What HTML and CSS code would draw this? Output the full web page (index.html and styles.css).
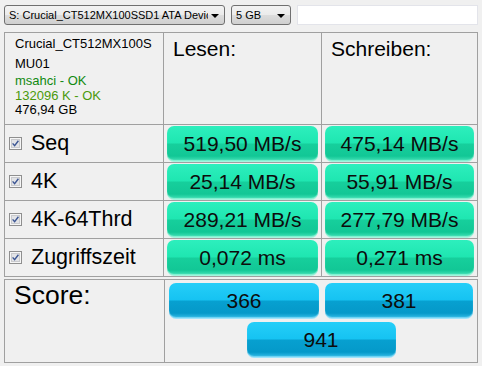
FILE: index.html
```html
<!DOCTYPE html>
<html lang="de">
<head>
  <meta charset="UTF-8" />
  <title>AS SSD Benchmark</title>
  <link rel="stylesheet" href="styles.css">
</head>
<body>

  <div class="toolbar">
    <div class="combo drive"><span>S: Crucial_CT512MX100SSD1 ATA Device</span><i class="arrow"></i></div>
    <div class="combo size"><span>5 GB</span><i class="arrow"></i></div>
    <div class="field"></div>
  </div>

  <div class="results">
    <div class="cell info">
      <div class="name">Crucial_CT512MX100S<br>MU01</div>
      <div class="driver">msahci - OK</div>
      <div class="cache">132096 K - OK</div>
      <div class="capacity">476,94 GB</div>
    </div>
    <div class="cell head">Lesen:</div>
    <div class="cell head">Schreiben:</div>

    <div class="cell label">
      <svg class="check" width="13" height="13" viewBox="0 0 13 13"><rect x="0.5" y="0.5" width="12" height="12" fill="#f6f6f6" stroke="#8f8f8f"/><rect x="2.5" y="2.5" width="8" height="8" fill="#e2e3e6" stroke="#c9cacd"/><path d="M3.6 6.4 L5.6 8.6 L9.4 3.8" fill="none" stroke="#3b5593" stroke-width="1.4"/></svg>
      Seq
    </div>
    <div class="cell slot"><div class="value">519,50 MB/s</div></div>
    <div class="cell slot"><div class="value">475,14 MB/s</div></div>

    <div class="cell label">
      <svg class="check" width="13" height="13" viewBox="0 0 13 13"><rect x="0.5" y="0.5" width="12" height="12" fill="#f6f6f6" stroke="#8f8f8f"/><rect x="2.5" y="2.5" width="8" height="8" fill="#e2e3e6" stroke="#c9cacd"/><path d="M3.6 6.4 L5.6 8.6 L9.4 3.8" fill="none" stroke="#3b5593" stroke-width="1.4"/></svg>
      4K
    </div>
    <div class="cell slot"><div class="value">25,14 MB/s</div></div>
    <div class="cell slot"><div class="value">55,91 MB/s</div></div>

    <div class="cell label">
      <svg class="check" width="13" height="13" viewBox="0 0 13 13"><rect x="0.5" y="0.5" width="12" height="12" fill="#f6f6f6" stroke="#8f8f8f"/><rect x="2.5" y="2.5" width="8" height="8" fill="#e2e3e6" stroke="#c9cacd"/><path d="M3.6 6.4 L5.6 8.6 L9.4 3.8" fill="none" stroke="#3b5593" stroke-width="1.4"/></svg>
      4K-64Thrd
    </div>
    <div class="cell slot"><div class="value">289,21 MB/s</div></div>
    <div class="cell slot"><div class="value">277,79 MB/s</div></div>

    <div class="cell label">
      <svg class="check" width="13" height="13" viewBox="0 0 13 13"><rect x="0.5" y="0.5" width="12" height="12" fill="#f6f6f6" stroke="#8f8f8f"/><rect x="2.5" y="2.5" width="8" height="8" fill="#e2e3e6" stroke="#c9cacd"/><path d="M3.6 6.4 L5.6 8.6 L9.4 3.8" fill="none" stroke="#3b5593" stroke-width="1.4"/></svg>
      Zugriffszeit
    </div>
    <div class="cell slot"><div class="value">0,072 ms</div></div>
    <div class="cell slot"><div class="value">0,271 ms</div></div>
  </div>

  <div class="score">
    <div class="cell score-title">Score:</div>
    <div class="cell score-values">
      <div class="pill read">366</div>
      <div class="pill write">381</div>
      <div class="pill total">941</div>
    </div>
  </div>

</body>
</html>
```

FILE: styles.css
```css
* {
  box-sizing: border-box;
}

body {
  margin: 0;
  width: 482px;
  height: 366px;
  overflow: hidden;
  background: #f0f0f0;
  color: #000;
  font-family: "Liberation Sans", Arial, sans-serif;
}

/* top bar */
.toolbar {
  display: flex;
  gap: 6px;
  padding: 5px 0 0 4px;
}

.combo {
  height: 20px;
  display: flex;
  align-items: center;
  padding-left: 4px;
  border: 1px solid #707070;
  border-radius: 3px;
  background: linear-gradient(#f3f3f3, #ebebeb 50%, #dddddd 50%, #cfcfcf);
  font-size: 11px;
}

.combo span {
  flex: 1;
  overflow: hidden;
  white-space: nowrap;
}

.combo .arrow {
  width: 0;
  height: 0;
  margin: 1px 5px 0 3px;
  border-left: 4px solid transparent;
  border-right: 4px solid transparent;
  border-top: 4px solid #000;
}

.drive {
  width: 221px;
}

.size {
  width: 60px;
}

.field {
  width: 181px;
  height: 20px;
  background: #fff;
  border: 1px solid #e3e4ea;
}

/* result table */
.results {
  width: 474px;
  margin: 7px 0 0 4px;
  display: grid;
  grid-template-columns: 158px 157px 155px;
  grid-template-rows: 91px repeat(4, 37px);
  gap: 1px;
  background: #a0a0a0;
  border: 1px solid #a0a0a0;
}

.cell {
  background: #f0f0f0;
}

.info {
  padding: 1px 0 0 10px;
  font-size: 13px;
}

.info .name {
  line-height: 20px;
}

.info .driver {
  line-height: 14px;
  color: #108a10;
}

.info .cache {
  line-height: 15px;
  color: #4a9a0c;
}

.info .capacity {
  line-height: 14px;
}

.head {
  padding: 4px 0 0 9px;
  font-size: 21px;
}

.label {
  display: flex;
  align-items: center;
  gap: 9px;
  padding-left: 4px;
  font-size: 21.5px;
}

.check {
  flex: none;
}

.slot {
  padding: 1px 3px;
}

.value,
.pill {
  display: flex;
  align-items: center;
  justify-content: center;
  height: 35px;
  border-radius: 7px;
  font-size: 21px;
  color: #0c0c0c;
}

.value {
  background: linear-gradient(#2defbd, #1fe6b1 48%, #16cf9c 52%, #12c796 86%, #44e3b8);
  box-shadow: 0 1px 0 #a4f5de, inset 0 -1px 1px rgba(190, 255, 235, 0.6);
}

/* score */
.score {
  width: 474px;
  height: 84px;
  margin: 2px 0 0 4px;
  display: grid;
  grid-template-columns: 159px 312px;
  gap: 1px;
  background: #a0a0a0;
  border: 1px solid #a0a0a0;
}

.score-title {
  padding-left: 9px;
  font-size: 26.5px;
}

.score-values {
  display: flex;
  flex-wrap: wrap;
  justify-content: center;
  align-content: flex-start;
  gap: 4px 6px;
  padding-top: 3px;
}

.pill {
  background: linear-gradient(#25cef8, #16c3f2 48%, #07a0d0 52%, #0599c9 86%, #33bce8);
  box-shadow: 0 1px 0 #a0e4fb, inset 0 -1px 1px rgba(170, 235, 255, 0.6);
}

.pill.read {
  width: 150px;
}

.pill.write {
  width: 148px;
}

.pill.total {
  width: 149px;
}
```
